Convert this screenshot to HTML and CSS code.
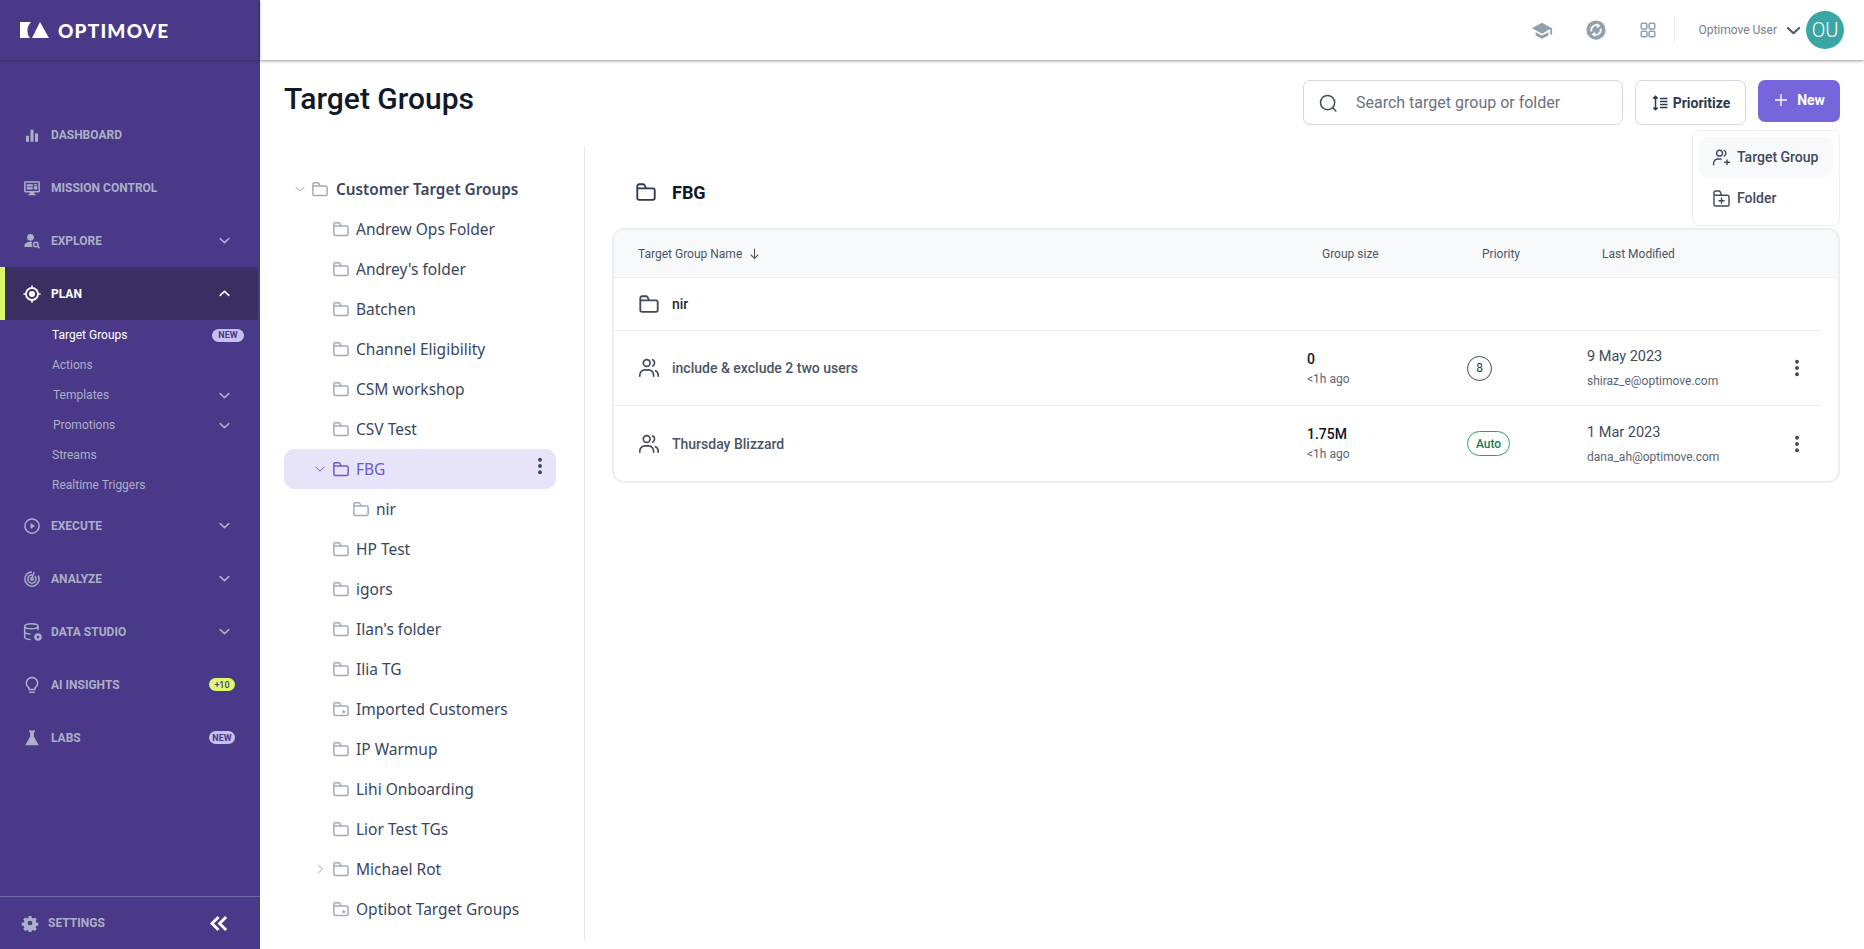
FILE: index.html
```html
<!DOCTYPE html>
<html lang="en">
<head>
    <meta charset="UTF-8">
    <title>Target Groups</title>
    <link rel="stylesheet" href="styles.css">
</head>
<body>
    <svg class="sprite" xmlns="http://www.w3.org/2000/svg">
        <symbol id="folder" viewBox="0 0 24 24"><path d="M2.500 8V5.500a2 2 0 0 1 2-2h4.200a2 2 0 0 1 1.700 1l1.800 3.500H2.500M2.500 8v10.500a2 2 0 0 0 2 2h15a2 2 0 0 0 2-2V10a2 2 0 0 0-2-2h-7" fill="none" stroke="currentColor" stroke-width="2" stroke-linecap="round" stroke-linejoin="round"/></symbol>
        <symbol id="folder-dot" viewBox="0 0 24 24"><path d="M2.500 8V5.500a2 2 0 0 1 2-2h4.200a2 2 0 0 1 1.700 1l1.800 3.500H2.500M2.500 8v10.500a2 2 0 0 0 2 2h15a2 2 0 0 0 2-2V10a2 2 0 0 0-2-2h-7" fill="none" stroke="currentColor" stroke-width="2" stroke-linecap="round" stroke-linejoin="round"/><path d="M15.500 12.500l.9 2 2.100.2-1.600 1.400.5 2.100-1.900-1.100-1.900 1.100.5-2.100-1.600-1.400 2.100-.2z" fill="currentColor"/></symbol>
        <symbol id="users" viewBox="0 0 24 24"><g fill="none" stroke="currentColor" stroke-width="1.800" stroke-linecap="round"><circle cx="9.500" cy="6.500" r="3.700"/><path d="M2 21v-1.500a5.500 5.500 0 0 1 5.500-5.500h4a5.500 5.500 0 0 1 5.500 5.500V21M16 3a4 4 0 0 1 0 7M22 21v-1.500a5 5 0 0 0-3-4.500"/></g></symbol>
        <symbol id="chev-down" viewBox="0 0 24 24"><path d="M4 8.500l8 7.500 8-7.500" fill="none" stroke="currentColor" stroke-width="2.800" stroke-linecap="round" stroke-linejoin="round"/></symbol>
        <symbol id="chev-thin" viewBox="0 0 24 24"><path d="M4 8.500l8 8 8-8" fill="none" stroke="currentColor" stroke-width="2" stroke-linecap="round" stroke-linejoin="round"/></symbol>
        <symbol id="kebab" viewBox="0 0 24 24"><circle cx="12" cy="4.500" r="2.300" fill="currentColor"/><circle cx="12" cy="12" r="2.300" fill="currentColor"/><circle cx="12" cy="19.500" r="2.300" fill="currentColor"/></symbol>
    </svg>

    <div class="app">
        <aside class="sidebar">
            <div class="logo">
                <svg class="logo-mark" viewBox="0 0 29 16"><path d="M0 0h11C7 4 6 11 10 16H0z" fill="#fff"/><path d="M20 0l9 16H12z" fill="#fff"/></svg>
                <span class="logo-text">OPTIMOVE</span>
            </div>
            <nav class="nav">
                <a class="nav-item">
                    <svg class="nav-icon" viewBox="0 0 24 24"><path d="M4 13h4v8H4zM10 5h4v16h-4zM16 10h4v11h-4z" fill="currentColor"/></svg>
                    <span class="nav-label">Dashboard</span>
                </a>
                <a class="nav-item">
                    <svg class="nav-icon" viewBox="0 0 24 24"><path d="M3 3h18a1.500 1.500 0 0 1 1.500 1.500v12A1.500 1.500 0 0 1 21 18h-6v2h2v1.500H7V20h2v-2H3a1.500 1.500 0 0 1-1.500-1.500v-12A1.500 1.500 0 0 1 3 3zm.500 2v11h17V5zM5 7h8v3H5zm9.500 0H19v1.500h-4.500zm0 2.500H19V14h-4.500zM5 11h8v3H5z" fill="currentColor" fill-rule="evenodd"/></svg>
                    <span class="nav-label">Mission Control</span>
                </a>
                <a class="nav-item">
                    <svg class="nav-icon" viewBox="0 0 24 24"><circle cx="10" cy="7" r="4.500" fill="currentColor"/><path d="M2 20v-2c0-3 4-5 8-5 1 0 1.500.100 2 .200-.800 2-.500 4.800 1 6.800z" fill="currentColor"/><circle cx="17" cy="16.500" r="3" fill="none" stroke="currentColor" stroke-width="2"/><path d="M19.500 19l2.500 2.500" stroke="currentColor" stroke-width="2"/></svg>
                    <span class="nav-label">Explore</span>
                    <svg class="nav-chev"><use href="#chev-down"/></svg>
                </a>
                <a class="nav-item active">
                    <svg class="nav-icon" viewBox="0 0 24 24"><circle cx="12" cy="12" r="8" fill="none" stroke="currentColor" stroke-width="2.400"/><circle cx="12" cy="12" r="4" fill="currentColor"/><path d="M12 .5v3.500M12 20v3.500M.5 12H4M20 12h3.500" stroke="currentColor" stroke-width="2"/></svg>
                    <span class="nav-label">Plan</span>
                    <svg class="nav-chev up"><use href="#chev-down"/></svg>
                </a>
                <div class="subnav">
                    <a class="sub-item current">Target Groups <span class="badge badge-sub">NEW</span></a>
                    <a class="sub-item">Actions</a>
                    <a class="sub-item shifted">Templates <svg class="nav-chev"><use href="#chev-down"/></svg></a>
                    <a class="sub-item shifted">Promotions <svg class="nav-chev"><use href="#chev-down"/></svg></a>
                    <a class="sub-item">Streams</a>
                    <a class="sub-item">Realtime Triggers</a>
                </div>
                <a class="nav-item">
                    <svg class="nav-icon" viewBox="0 0 24 24"><circle cx="12" cy="12" r="9.500" fill="none" stroke="currentColor" stroke-width="2"/><path d="M10 8l6 4-6 4z" fill="currentColor"/></svg>
                    <span class="nav-label">Execute</span>
                    <svg class="nav-chev"><use href="#chev-down"/></svg>
                </a>
                <a class="nav-item">
                    <svg class="nav-icon" viewBox="0 0 24 24"><g fill="none" stroke="currentColor" stroke-width="2"><path d="M12 2.500a9.500 9.500 0 1 0 9.500 9.500c0-2-.700-3.500-1.500-4.700"/><path d="M12 6.500a5.500 5.500 0 1 0 5.500 5.500c0-1.500-1-3-2-3.700"/><circle cx="12" cy="12" r="1.800"/><path d="M12 10l3-7"/></g></svg>
                    <span class="nav-label">Analyze</span>
                    <svg class="nav-chev"><use href="#chev-down"/></svg>
                </a>
                <a class="nav-item">
                    <svg class="nav-icon wide" viewBox="0 0 24 24"><g fill="none" stroke="currentColor" stroke-width="1.800"><ellipse cx="10" cy="5" rx="8" ry="3"/><path d="M2 5v13c0 1.700 3.500 3 7 3M2 11.500c0 1.700 3.500 3 7 3M18 5v5"/></g><circle cx="18" cy="18" r="4.500" fill="currentColor"/><circle cx="18" cy="18" r="1.500" fill="#4a3888"/></svg>
                    <span class="nav-label">Data Studio</span>
                    <svg class="nav-chev"><use href="#chev-down"/></svg>
                </a>
                <a class="nav-item">
                    <svg class="nav-icon" viewBox="0 0 24 24"><path d="M12 2a7.500 7.500 0 0 0-4 13.800V18h8v-2.200A7.500 7.500 0 0 0 12 2zM9 21.500h6" fill="none" stroke="currentColor" stroke-width="2" stroke-linecap="round"/></svg>
                    <span class="nav-label">AI Insights</span>
                    <span class="badge badge-lime">+10</span>
                </a>
                <a class="nav-item">
                    <svg class="nav-icon" viewBox="0 0 24 24"><path d="M8 2h8v2h-1.500v6L21 21.500H3L9.500 10V4H8z" fill="currentColor"/></svg>
                    <span class="nav-label">Labs</span>
                    <span class="badge badge-new">NEW</span>
                </a>
            </nav>
            <div class="settings">
                <svg class="nav-icon" viewBox="0 0 24 24"><path fill-rule="evenodd" fill="currentColor" d="M10 1.500h4l.600 3 2 .900 2.600-1.600 2.800 2.800-1.600 2.600.900 2 3 .600v4l-3 .600-.900 2 1.600 2.600-2.800 2.800-2.600-1.600-2 .900-.600 3h-4l-.600-3-2-.900-2.600 1.600-2.800-2.800 1.600-2.600-.900-2-3-.600v-4l3-.600.900-2-1.600-2.600 2.800-2.800 2.600 1.600 2-.900zM12 8.500a3.500 3.500 0 1 0 0 7 3.500 3.500 0 0 0 0-7z" transform="translate(1.200 1.200) scale(.9)"/></svg>
                <span class="nav-label">Settings</span>
                <svg class="collapse" viewBox="0 0 20 18"><path d="M9 2L2 9l7 7M17 2l-7 7 7 7" fill="none" stroke="#fff" stroke-width="3"/></svg>
            </div>
        </aside>

        <div class="main">
            <header class="topbar">
                <svg class="top-icon" viewBox="0 0 24 24"><path d="M12 4L1 10l11 6 9-5v6h2v-7z" fill="currentColor"/><path d="M5 14.500V18l7 3.500 7-3.500v-3.500L12 18z" fill="currentColor"/></svg>
                <svg class="top-icon" viewBox="0 0 24 24"><circle cx="12" cy="12" r="10.500" fill="currentColor"/><g fill="none" stroke="#fff" stroke-width="1.900"><path d="M7 13.500a5.200 5.200 0 0 1 7.500-6"/><path d="M17 10.500a5.200 5.200 0 0 1-7.500 6"/></g><path d="M12.800 4.500l4 2.500-3.500 3zM11.200 19.500l-4-2.500 3.500-3z" fill="#fff"/></svg>
                <svg class="top-icon grid-icon" viewBox="0 0 24 24"><g fill="none" stroke="currentColor" stroke-width="2"><rect x="3" y="3" width="7.500" height="7.500" rx="1.500"/><rect x="13.500" y="3" width="7.500" height="7.500" rx="1.500"/><rect x="3" y="13.500" width="7.500" height="7.500" rx="1.500"/><rect x="13.500" y="13.500" width="7.500" height="7.500" rx="1.500"/></g></svg>
                <span class="top-sep"></span>
                <span class="user-name">Optimove User</span>
                <svg class="user-chev"><use href="#chev-down"/></svg>
                <span class="avatar">OU</span>
            </header>

            <div class="page-head">
                <h1>Target Groups</h1>
                <div class="actions">
                    <div class="search">
                        <svg class="search-icon" viewBox="0 0 24 24"><circle cx="11.500" cy="11.500" r="8.500" fill="none" stroke="currentColor" stroke-width="1.800"/><path d="M18 18l3.500 3.500" stroke="currentColor" stroke-width="1.800" stroke-linecap="round"/></svg>
                        <span>Search target group or folder</span>
                    </div>
                    <button class="btn btn-outline">
                        <svg class="btn-icon" viewBox="0 0 24 24"><path d="M6 3v18M3 6l3-3 3 3M3 18l3 3 3-3M12 6h10M12 10h10M12 14h10M12 18h10" fill="none" stroke="currentColor" stroke-width="2"/></svg>
                        Prioritize
                    </button>
                    <button class="btn btn-primary">
                        <svg class="btn-plus" viewBox="0 0 24 24"><path d="M12 3v18M3 12h18" fill="none" stroke="currentColor" stroke-width="2"/></svg>
                        New
                    </button>
                    <div class="menu">
                        <a class="menu-item hover">
                            <svg class="menu-icon" viewBox="0 0 24 24"><g fill="none" stroke="currentColor" stroke-width="1.800" stroke-linecap="round"><circle cx="9.500" cy="6.500" r="3.700"/><path d="M2 21v-1.500a5.500 5.500 0 0 1 5.500-5.500h4M15.500 3a4 4 0 0 1 0 7M19 15v6M16 18h6"/></g></svg>
                            Target Group
                        </a>
                        <a class="menu-item">
                            <svg class="menu-icon" viewBox="0 0 24 24"><path d="M2.500 8V4.500a2 2 0 0 1 2-2h4.200a2 2 0 0 1 1.700 1l1.800 4.500H2.500M2.500 8v11.500a2 2 0 0 0 2 2h15a2 2 0 0 0 2-2V10a2 2 0 0 0-2-2h-7M12 11.500v6.500M8.800 14.800h6.400" fill="none" stroke="currentColor" stroke-width="1.800" stroke-linecap="round" stroke-linejoin="round"/></svg>
                            Folder
                        </a>
                    </div>
                </div>
            </div>

            <div class="workspace">
                <div class="tree">
                    <div class="tree-row root"><svg class="tree-chev"><use href="#chev-thin"/></svg><svg class="folder"><use href="#folder"/></svg>Customer Target Groups</div>
                    <div class="tree-row"><svg class="folder"><use href="#folder"/></svg>Andrew Ops Folder</div>
                    <div class="tree-row"><svg class="folder"><use href="#folder"/></svg>Andrey's folder</div>
                    <div class="tree-row"><svg class="folder"><use href="#folder"/></svg>Batchen</div>
                    <div class="tree-row"><svg class="folder"><use href="#folder"/></svg>Channel Eligibility</div>
                    <div class="tree-row"><svg class="folder"><use href="#folder"/></svg>CSM workshop</div>
                    <div class="tree-row"><svg class="folder"><use href="#folder"/></svg>CSV Test</div>
                    <div class="tree-row selected"><svg class="tree-chev"><use href="#chev-thin"/></svg><svg class="folder"><use href="#folder"/></svg>FBG<svg class="tree-kebab"><use href="#kebab"/></svg></div>
                    <div class="tree-row nested"><svg class="folder"><use href="#folder"/></svg>nir</div>
                    <div class="tree-row"><svg class="folder"><use href="#folder"/></svg>HP Test</div>
                    <div class="tree-row"><svg class="folder"><use href="#folder"/></svg>igors</div>
                    <div class="tree-row"><svg class="folder"><use href="#folder"/></svg>Ilan's folder</div>
                    <div class="tree-row"><svg class="folder"><use href="#folder"/></svg>Ilia TG</div>
                    <div class="tree-row"><svg class="folder"><use href="#folder-dot"/></svg>Imported Customers</div>
                    <div class="tree-row"><svg class="folder"><use href="#folder"/></svg>IP Warmup</div>
                    <div class="tree-row"><svg class="folder"><use href="#folder"/></svg>Lihi Onboarding</div>
                    <div class="tree-row"><svg class="folder"><use href="#folder"/></svg>Lior Test TGs</div>
                    <div class="tree-row"><svg class="tree-chev closed"><use href="#chev-thin"/></svg><svg class="folder"><use href="#folder"/></svg>Michael Rot</div>
                    <div class="tree-row"><svg class="folder"><use href="#folder-dot"/></svg>Optibot Target Groups</div>
                </div>

                <section class="panel">
                    <div class="panel-title"><svg class="title-folder"><use href="#folder"/></svg>FBG</div>
                    <div class="card">
                        <div class="table-row table-head">
                            <span class="th-name">Target Group Name
                                <svg class="sort" viewBox="0 0 24 24"><path d="M12 3v18M5 14l7 7 7-7" fill="none" stroke="currentColor" stroke-width="2"/></svg>
                            </span>
                            <span class="th-size">Group size</span>
                            <span class="th-prio">Priority</span>
                            <span class="th-mod">Last Modified</span>
                        </div>
                        <div class="table-row folder-row">
                            <span class="cell-name strong"><svg class="row-icon"><use href="#folder"/></svg>nir</span>
                        </div>
                        <div class="table-row group-row">
                            <span class="cell-name"><svg class="row-icon"><use href="#users"/></svg>include &amp; exclude 2 two users</span>
                            <span class="cell-stack"><b>0</b><small>&lt;1h ago</small></span>
                            <span><span class="prio-num">8</span></span>
                            <span class="cell-stack mod"><em>9 May 2023</em><small>shiraz_e@optimove.com</small></span>
                            <svg class="row-kebab"><use href="#kebab"/></svg>
                        </div>
                        <div class="table-row group-row last">
                            <span class="cell-name"><svg class="row-icon"><use href="#users"/></svg>Thursday Blizzard</span>
                            <span class="cell-stack"><b>1.75M</b><small>&lt;1h ago</small></span>
                            <span><span class="prio-auto">Auto</span></span>
                            <span class="cell-stack mod"><em>1 Mar 2023</em><small>dana_ah@optimove.com</small></span>
                            <svg class="row-kebab"><use href="#kebab"/></svg>
                        </div>
                    </div>
                </section>
            </div>
        </div>
    </div>
</body>
</html>
```

FILE: styles.css
```css
/* Target groups page */

* {
    box-sizing: border-box;
}

html, body {
    height: 100%;
}

body {
    margin: 0;
    font-family: Roboto, Arial, sans-serif;
    background-color: white;
    color: #2f3a4f;
    overflow: hidden;
}

.sprite {
    display: none;
}

.app {
    display: flex;
    height: 949px;
}

/* sidebar */

.sidebar {
    width: 260px;
    flex-shrink: 0;
    display: flex;
    flex-direction: column;
    background-color: #4a3888;
    color: #aab0c8;
}

.logo {
    height: 60px;
    display: flex;
    align-items: center;
    gap: 9px;
    padding-left: 20px;
    box-shadow: 0 1px 3px rgba(0, 0, 0, 0.25);
}

.logo-mark {
    width: 29px;
    height: 16px;
}

.logo-text {
    font-family: Lato, sans-serif;
    font-weight: 900;
    font-size: 19px;
    letter-spacing: 1.2px;
    color: white;
}

.nav {
    flex: 1;
    padding-top: 48px;
}

.nav-item {
    position: relative;
    height: 53px;
    display: flex;
    align-items: center;
    padding-left: 23px;
    padding-right: 29px;
    font-size: 12px;
    font-weight: 700;
}

.nav-item.active {
    margin-right: 2px;
    background-color: #3a2f63;
    border-left: 5px solid #dcf96c;
    padding-left: 18px;
    padding-right: 27px;
    border-radius: 0 3px 3px 0;
    color: white;
}

.nav-icon {
    width: 18px;
    height: 18px;
    flex-shrink: 0;
}

.nav-icon.wide {
    width: 20px;
    height: 20px;
    margin-right: -2px;
}

.nav-label {
    margin-left: 10px;
    text-transform: uppercase;
}

.nav-chev {
    width: 13px;
    height: 13px;
    margin-left: auto;
}

.nav-chev.up {
    transform: rotate(180deg);
}

.subnav {
    height: 179px;
}

.sub-item {
    height: 30px;
    display: flex;
    align-items: center;
    padding-left: 52px;
    padding-right: 29px;
    font-size: 12px;
}

.sub-item.shifted {
    padding-left: 53px;
}

.sub-item.current {
    color: white;
}

.badge {
    margin-left: auto;
    height: 13px;
    display: flex;
    align-items: center;
    justify-content: center;
    border-radius: 7px;
    font-size: 9px;
    font-weight: 700;
    color: #4a3888;
}

.badge-sub {
    width: 32px;
    margin-right: -13px;
    background-color: #c6c0f0;
}

.badge-new {
    width: 26px;
    margin-right: -4px;
    background-color: #c6c0f0;
}

.badge-lime {
    width: 26px;
    margin-right: -4px;
    background-color: #dcf96c;
    font-weight: 500;
}

.settings {
    height: 53px;
    border-top: 1px solid #6f6ba0;
    display: flex;
    align-items: center;
    padding-left: 21px;
    font-size: 12px;
    font-weight: 700;
}

.settings .nav-label {
    margin-left: 9px;
}

.collapse {
    width: 19px;
    height: 17px;
    margin-left: auto;
    margin-right: 31px;
}

/* top bar */

.main {
    flex: 1;
    min-width: 0;
    display: flex;
    flex-direction: column;
}

.topbar {
    height: 60px;
    flex-shrink: 0;
    display: flex;
    align-items: center;
    justify-content: flex-end;
    padding-right: 20px;
    box-shadow: 0 1px 3px rgba(0, 0, 0, 0.4);
    color: #90a0ad;
}

.top-icon {
    width: 22px;
    height: 22px;
    margin-right: 32px;
}

.grid-icon {
    width: 18px;
    height: 18px;
    margin-right: 17px;
}

.top-sep {
    width: 1px;
    height: 28px;
    background-color: #eceef2;
    margin-right: 23px;
}

.user-name {
    font-size: 12px;
    color: #76808f;
}

.user-chev {
    width: 17px;
    height: 17px;
    margin-left: 8px;
    margin-right: 4px;
    color: #4a5568;
}

.avatar {
    width: 38px;
    height: 38px;
    border-radius: 50%;
    background-color: #3aa6a6;
    color: white;
    display: flex;
    align-items: center;
    justify-content: center;
    font-size: 20px;
    font-weight: 300;
}

/* page head */

.page-head {
    height: 86px;
    flex-shrink: 0;
    display: flex;
    justify-content: space-between;
    align-items: flex-start;
    padding: 20px 24px 0 24px;
}

h1 {
    margin: 0;
    font-size: 30px;
    line-height: 37px;
    font-weight: 500;
    color: #111827;
}

.actions {
    position: relative;
    display: flex;
    align-items: flex-start;
    gap: 12px;
}

.search {
    width: 320px;
    height: 45px;
    display: flex;
    align-items: center;
    gap: 18px;
    padding-left: 14px;
    border: 1px solid #d3d7e2;
    border-radius: 7px;
    font-size: 16px;
    color: #6b7280;
}

.search-icon {
    width: 20px;
    height: 20px;
    color: #3f4a5c;
}

.btn {
    font-family: inherit;
    display: flex;
    align-items: center;
    justify-content: center;
    cursor: pointer;
    border-radius: 7px;
    font-size: 14px;
    font-weight: 700;
}

.btn-outline {
    width: 111px;
    height: 45px;
    gap: 4px;
    padding: 0;
    background-color: white;
    border: 1px solid #d3d7e2;
    color: #2f3a4f;
}

.btn-icon {
    width: 18px;
    height: 18px;
}

.btn-primary {
    width: 82px;
    height: 42px;
    gap: 8px;
    padding: 0 0 2px 0;
    border: none;
    background-color: #7567db;
    color: white;
}

.btn-plus {
    width: 16px;
    height: 16px;
}

.menu {
    position: absolute;
    top: 50px;
    right: 0;
    width: 148px;
    height: 96px;
    padding: 6px;
    background-color: white;
    border: 1px solid #eceef2;
    border-radius: 7px;
}

.menu-item {
    height: 40px;
    display: flex;
    align-items: center;
    gap: 6px;
    padding-left: 13px;
    margin-bottom: 1px;
    border-radius: 8px;
    font-size: 14px;
    font-weight: 500;
    color: #3f4a5c;
}

.menu-item.hover {
    background-color: #f8f9fb;
}

.menu-icon {
    width: 19px;
    height: 19px;
}

/* tree + table */

.workspace {
    flex: 1;
    min-height: 0;
    display: flex;
    padding-bottom: 9px;
}

.tree {
    width: 325px;
    flex-shrink: 0;
    margin-right: 27px;
    padding: 23px 28px 0 24px;
    border-right: 1px solid #e6e8ee;
    overflow: hidden;
}

.tree-row {
    position: relative;
    height: 40px;
    display: flex;
    align-items: center;
    padding-left: 48px;
    border-radius: 10px;
    font-family: "Noto Sans", sans-serif;
    font-size: 15.5px;
    color: #3a4660;
}

.tree-row.root {
    padding-left: 10px;
    font-size: 15.3px;
    font-weight: 600;
}

.tree-row.nested {
    padding-left: 68px;
}

.tree-row.selected {
    padding-left: 30px;
    background-color: #e7e4fa;
    color: #6a5acd;
}

.folder {
    width: 18px;
    height: 18px;
    margin-right: 6px;
    color: #a4aabb;
}

.selected .folder {
    color: #6a5acd;
}

.root .folder {
    margin-right: 7px;
}

.tree-chev {
    width: 12px;
    height: 12px;
    margin-right: 5px;
    color: #a4aabb;
}

.selected .tree-chev {
    margin-right: 6px;
    color: #6a5acd;
}

.tree-row > .tree-chev.closed {
    position: absolute;
    left: 30px;
    transform: rotate(-90deg);
}

.tree-kebab {
    width: 20px;
    height: 20px;
    margin-left: auto;
    margin-right: 6px;
    margin-bottom: 6px;
    color: #3a4660;
}

.panel {
    flex: 1;
    min-width: 0;
    padding-right: 24px;
}

.panel-title {
    height: 82px;
    display: flex;
    align-items: center;
    padding-left: 23px;
    padding-top: 10px;
    font-size: 18px;
    font-weight: 700;
    color: #111827;
}

.title-folder {
    width: 22px;
    height: 22px;
    margin-right: 15px;
    color: #2f3a4f;
}

.card {
    border: 2px solid #eceef2;
    border-radius: 12px;
    overflow: hidden;
}

.table-row {
    display: grid;
    grid-template-columns: 669px 160px 120px 193px 34px;
    align-items: center;
    padding-left: 24px;
    margin-right: 16px;
    border-bottom: 1px solid #eceef2;
}

.table-head {
    height: 48px;
    margin-right: 0;
    background-color: #f8f9fb;
    font-size: 12px;
    color: #4b5563;
}

.th-name {
    display: flex;
    align-items: center;
    gap: 6px;
}

.sort {
    width: 13px;
    height: 13px;
}

.th-size {
    padding-left: 15px;
}

.th-prio {
    padding-left: 15px;
}

.th-mod {
    padding-left: 15px;
}

.folder-row {
    height: 53px;
}

.group-row {
    height: 75px;
}

.group-row.last {
    border-bottom: none;
}

.cell-name {
    display: flex;
    align-items: center;
    font-size: 14px;
    font-weight: 500;
    color: #4b5563;
}

.cell-name.strong {
    color: #1f2937;
}

.row-icon {
    width: 22px;
    height: 22px;
    margin-right: 12px;
    color: #3f4a5c;
}

.cell-stack {
    display: flex;
    flex-direction: column;
    gap: 5px;
}

.cell-stack b {
    font-size: 14px;
    font-weight: 500;
    color: #111827;
}

.cell-stack small {
    font-size: 12px;
    color: #5b6472;
}

.cell-stack.mod {
    gap: 9px;
}

.cell-stack em {
    font-style: normal;
    font-size: 14.5px;
    color: #3f4a5c;
}

.prio-num {
    width: 25px;
    height: 25px;
    display: flex;
    align-items: center;
    justify-content: center;
    border: 1px solid #3f4a5c;
    border-radius: 50%;
    font-size: 12px;
}

.prio-auto {
    width: 43px;
    height: 25px;
    display: flex;
    align-items: center;
    justify-content: center;
    border: 1px solid #2f9e68;
    border-radius: 13px;
    font-size: 12px;
    font-weight: 500;
    color: #1f7a4f;
}

.row-kebab {
    width: 20px;
    height: 22px;
    justify-self: center;
    color: #3f4a5c;
}
```
